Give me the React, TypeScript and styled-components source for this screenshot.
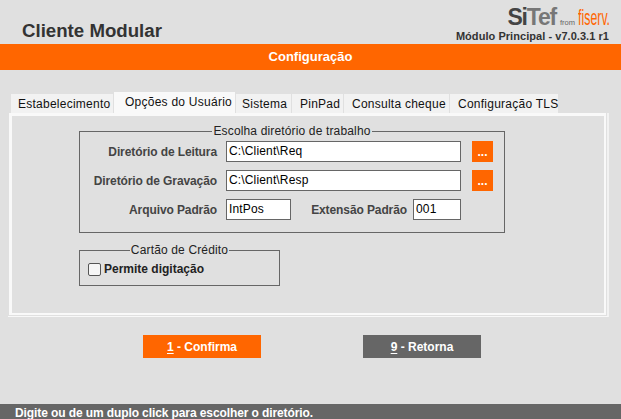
import React from "react";
import styled, { createGlobalStyle } from "styled-components";

const GlobalStyle = createGlobalStyle`
  html, body {
    margin: 0;
    padding: 0;
    background: #e0e0e0;
    font-family: "Liberation Sans", Arial, sans-serif;
  }
`;

const Page = styled.div`
  width: 621px;
  height: 419px;
  display: flex;
  flex-direction: column;
  overflow: hidden;
  background: #e0e0e0;
`;

const Header = styled.div`
  height: 44px;
  padding: 0 12px 0 22px;
  display: flex;
  justify-content: space-between;
  align-items: flex-end;
`;

const Title = styled.h1`
  margin: 0 0 3px;
  font-size: 18.67px;
  line-height: 21px;
  font-weight: bold;
  color: #333;
`;

const Brand = styled.div`
  display: flex;
  flex-direction: column;
  align-items: flex-end;
`;

const Logo = styled.div`
  display: flex;
  align-items: baseline;
  height: 24px;
  line-height: 24px;
  margin-right: -1px;
`;

const LogoSitef = styled.span`
  font-size: 23px;
  font-weight: bold;
  letter-spacing: -1.2px;
  color: #777;
  b {
    color: #444;
  }
`;

const LogoFrom = styled.span`
  font-size: 7.5px;
  color: #666;
  margin: 0 0 0 4px;
`;

const LogoFiserv = styled.span`
  display: inline-block;
  margin-left: -22px;
  font-size: 22px;
  color: #f60;
  transform: scaleX(0.56);
  transform-origin: right;
`;

const Version = styled.div`
  font-size: 11px;
  line-height: 15px;
  font-weight: bold;
  color: #333;
  letter-spacing: 0.05px;
`;

const TitleBar = styled.div`
  height: 26px;
  line-height: 26px;
  background: #f60;
  color: #fff;
  text-align: center;
  font-size: 13px;
  font-weight: bold;
`;

const Tabs = styled.div`
  display: flex;
  align-items: flex-end;
  gap: 1px;
  height: 43px;
  padding-left: 11px;
`;

const Tab = styled.div<{ $active?: boolean; $width: number; $inset: number }>`
  position: relative;
  width: ${(p) => p.$width}px;
  height: ${(p) => (p.$active ? 22 : 19)}px;
  margin-bottom: ${(p) => (p.$active ? -1 : 0)}px;
  box-sizing: border-box;
  padding-left: ${(p) => p.$inset}px;
  line-height: 20px;
  background: ${(p) => (p.$active ? "#f9f9f9" : "#f2f2f2")};
  font-size: 12px;
  color: #111;
  letter-spacing: 0.25px;
  white-space: nowrap;
`;

const Panel = styled.div`
  margin-left: 8px;
  width: 601px;
  height: 204px;
  box-sizing: border-box;
  padding: 0 1px 1px 1px;
  border-right: 2px solid #f2f2f2;
  border-bottom: 1px solid #f8f8f8;
`;

const PanelInner = styled.div`
  height: 100%;
  box-sizing: border-box;
  border-style: solid;
  border-color: #f9f9f9;
  border-width: 3px 2px 2px 3px;
  padding: 9px 0 0 67px;
`;

const Group = styled.fieldset<{ $width: number; $height: number }>`
  width: ${(p) => p.$width}px;
  height: ${(p) => p.$height}px;
  box-sizing: border-box;
  margin: 0;
  padding: 0;
  border: 1px solid #666;
`;

const GroupLegend = styled.legend`
  margin: 0 auto;
  padding: 0 1px;
  font-size: 12px;
  line-height: 13px;
  color: #222;
  letter-spacing: 0.15px;
`;

const DirForm = styled.div`
  display: grid;
  grid-template-columns: 146px 235px 11px 21px;
  grid-auto-rows: 21px;
  row-gap: 8px;
  padding-top: 3px;
  align-items: center;
`;

const Label = styled.label`
  font-size: 12px;
  font-weight: bold;
  color: #444;
  text-align: right;
  padding: 1px 9px 0 0;
  letter-spacing: -0.1px;
`;

const TextInput = styled.input<{ $width?: number }>`
  width: ${(p) => (p.$width ? `${p.$width}px` : "100%")};
  height: 21px;
  box-sizing: border-box;
  border: 1px solid #666;
  background: #fff;
  padding: 0 2px 1px;
  font-family: "Liberation Sans", Arial, sans-serif;
  font-size: 12px;
  letter-spacing: 0.15px;
  color: #000;
  outline: none;
`;

const BrowseButton = styled.button`
  grid-column: 4;
  width: 21px;
  height: 21px;
  padding: 0;
  border: none;
  background: #f60;
  color: #fff;
  font-family: "Liberation Sans", Arial, sans-serif;
  font-size: 12px;
  font-weight: bold;
`;

const ExtraRow = styled.div`
  grid-column: 2 / 5;
  display: flex;
  align-items: center;
`;

const ExtraLabel = styled(Label)`
  width: 97px;
  margin: 0 6px 0 19px;
  padding-right: 0;
  white-space: nowrap;
`;

const CardSpacer = styled.div`
  height: 11px;
`;

const CheckRow = styled.div`
  display: flex;
  align-items: center;
  gap: 3px;
  padding: 5px 0 0 8px;
`;

const CheckBox = styled.input`
  appearance: none;
  width: 13px;
  height: 13px;
  margin: 0;
  box-sizing: border-box;
  border: 1px solid #555;
  border-radius: 2px;
  background: #f6f6f6;
`;

const CheckLabel = styled.label`
  font-size: 12px;
  font-weight: bold;
  color: #222;
`;

const Actions = styled.div`
  display: flex;
  gap: 102px;
  padding: 18px 0 0 143px;
  flex: 1;
`;

const ActionButton = styled.button<{ $color: string }>`
  width: 118px;
  height: 23px;
  border: none;
  padding: 0;
  background: ${(p) => p.$color};
  color: #fff;
  font-family: "Liberation Sans", Arial, sans-serif;
  font-size: 12px;
  font-weight: bold;
  u {
    text-underline-offset: 2px;
  }
`;

const StatusBar = styled.div`
  height: 15px;
  background: #666;
  color: #fff;
  padding-left: 15px;
  font-size: 12px;
  font-weight: bold;
  line-height: 19px;
  letter-spacing: -0.1px;
  white-space: nowrap;
`;

const tabs = [
  { label: "Estabelecimento", width: 102, inset: 7 },
  { label: "Opções do Usuário", width: 121, inset: 11, active: true },
  { label: "Sistema", width: 55, inset: 6 },
  { label: "PinPad", width: 51, inset: 8 },
  { label: "Consulta cheque", width: 105, inset: 8 },
  { label: "Configuração TLS", width: 108, inset: 8 },
];

export default function App() {
  return (
    <Page>
      <GlobalStyle />
      <Header>
        <Title>Cliente Modular</Title>
        <Brand>
          <Logo>
            <LogoSitef>
              <b>Si</b>Tef
            </LogoSitef>
            <LogoFrom>from</LogoFrom>
            <LogoFiserv>fiserv.</LogoFiserv>
          </Logo>
          <Version>Módulo Principal - v7.0.3.1 r1</Version>
        </Brand>
      </Header>
      <TitleBar>Configuração</TitleBar>
      <Tabs>
        {tabs.map((t) => (
          <Tab key={t.label} $active={t.active} $width={t.width} $inset={t.inset}>
            {t.label}
          </Tab>
        ))}
      </Tabs>
      <Panel>
        <PanelInner>
          <Group $width={426} $height={108}>
            <GroupLegend>Escolha diretório de trabalho</GroupLegend>
            <DirForm>
              <Label>Diretório de Leitura</Label>
              <TextInput defaultValue="C:\Client\Req" />
              <span />
              <BrowseButton>...</BrowseButton>
              <Label>Diretório de Gravação</Label>
              <TextInput defaultValue="C:\Client\Resp" />
              <span />
              <BrowseButton>...</BrowseButton>
              <Label>Arquivo Padrão</Label>
              <ExtraRow>
                <TextInput $width={65} defaultValue="IntPos" />
                <ExtraLabel>Extensão Padrão</ExtraLabel>
                <TextInput $width={48} defaultValue="001" />
              </ExtraRow>
            </DirForm>
          </Group>
          <CardSpacer />
          <Group $width={201} $height={42}>
            <GroupLegend>Cartão de Crédito</GroupLegend>
            <CheckRow>
              <CheckBox type="checkbox" />
              <CheckLabel>Permite digitação</CheckLabel>
            </CheckRow>
          </Group>
        </PanelInner>
      </Panel>
      <Actions>
        <ActionButton $color="#f60">
          <u>1</u> - Confirma
        </ActionButton>
        <ActionButton $color="#666">
          <u>9</u> - Retorna
        </ActionButton>
      </Actions>
      <StatusBar>Digite ou de um duplo click para escolher o diretório.</StatusBar>
    </Page>
  );
}
